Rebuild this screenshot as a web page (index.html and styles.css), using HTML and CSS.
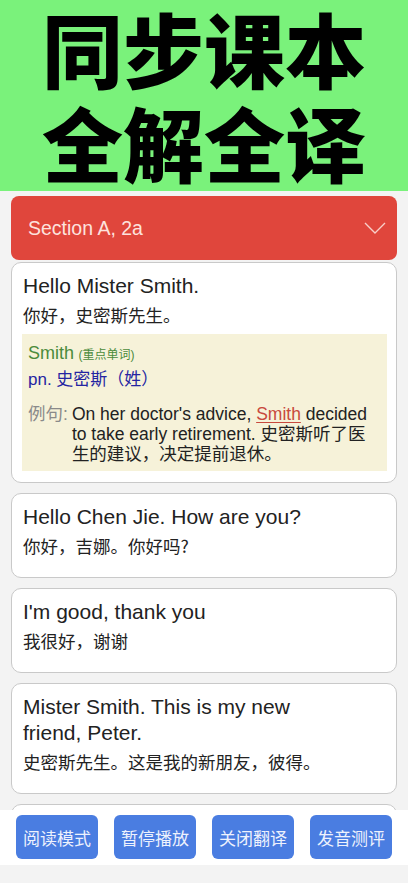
FILE: index.html
```html
<!DOCTYPE html>
<html lang="zh-CN">
<head>
<meta charset="utf-8">
<title>同步课本 全解全译</title>
<link rel="stylesheet" href="styles.css">
</head>
<body>
<div class="page">
  <header class="banner">
    <div class="banner-line">同步课本</div>
    <div class="banner-line">全解全译</div>
  </header>

  <main class="scroll">
    <div class="section-head">
      <span class="section-title">Section A, 2a</span>
      <svg class="chevron" width="22" height="12" viewBox="0 0 22 12" aria-hidden="true">
        <polyline points="1,1 11,11 21,1" fill="none" stroke="#f8cfc9" stroke-width="1.4"/>
      </svg>
    </div>

    <div class="card">
      <div class="en">Hello Mister Smith.</div>
      <div class="zh">你好，史密斯先生。</div>
      <div class="word-box">
        <div class="word-line"><span class="word">Smith</span> <span class="word-tag">(重点单词)</span></div>
        <div class="word-def">pn. 史密斯（姓）</div>
        <div class="example">
          <span class="example-label">例句:</span>
          <span class="example-text">On her doctor's advice, <span class="hl">Smith</span> decided to take early retirement. 史密斯听了医生的建议，决定提前退休。</span>
        </div>
      </div>
    </div>

    <div class="card">
      <div class="en">Hello Chen Jie. How are you?</div>
      <div class="zh">你好，吉娜。你好吗?</div>
    </div>

    <div class="card">
      <div class="en">I'm good, thank you</div>
      <div class="zh">我很好，谢谢</div>
    </div>

    <div class="card">
      <div class="en">Mister Smith. This is my new<br>friend, Peter.</div>
      <div class="zh">史密斯先生。这是我的新朋友，彼得。</div>
    </div>

    <div class="card">
      <div class="en">Nice to meet you, Peter.</div>
      <div class="zh">很高兴见到你，彼得。</div>
    </div>
  </main>

  <nav class="toolbar">
    <button class="tool-btn">阅读模式</button>
    <button class="tool-btn">暂停播放</button>
    <button class="tool-btn">关闭翻译</button>
    <button class="tool-btn">发音测评</button>
  </nav>
  <div class="bottom-gap"></div>
</div>
</body>
</html>
```

FILE: styles.css
```css
* { box-sizing: border-box; }

html, body {
  margin: 0;
  padding: 0;
  background: #f3f3f3;
}

body {
  font-family: "Liberation Sans", Arial, "Noto Sans CJK SC", sans-serif;
  color: #222;
}

.page {
  height: 883px;
  display: flex;
  flex-direction: column;
  overflow: hidden;
}

.banner {
  flex: 0 0 191px;
  background: #7af27b;
  display: flex;
  flex-direction: column;
  align-items: center;
  padding-top: 0;
}

.banner-line {
  font-family: "Noto Sans CJK SC", sans-serif;
  font-weight: 900;
  font-size: 81px;
  line-height: 94px;
  color: #000;
  letter-spacing: 0;
}

.scroll {
  flex: 1 1 auto;
  overflow: hidden;
  padding: 5px 11px 0;
}

.section-head {
  height: 64px;
  margin-bottom: 2px;
  background: #e0463c;
  border-radius: 8px;
  display: flex;
  align-items: center;
  justify-content: space-between;
  padding: 0 11px 0 17px;
}

.section-title {
  font-size: 19.5px;
  color: #fde2de;
}

.chevron { display: block; }

.card {
  background: #fff;
  border: 1px solid #c9c9c9;
  border-radius: 10px;
  padding: 10px 10px 19px 11px;
  margin-bottom: 10px;
}

.en {
  font-size: 21px;
  line-height: 26px;
  color: #222;
}

.zh {
  margin-top: 3px;
  font-family: "Noto Sans CJK SC", sans-serif;
  font-size: 17.5px;
  line-height: 25px;
  color: #222;
}

.word-box {
  margin: 7px -1px -8px -1px;
  background: #f6f2d9;
  padding: 6px 6px 7px 6px;
}

.word-line {
  line-height: 26px;
}

.word {
  font-size: 18px;
  color: #4b8b3b;
}

.word-tag {
  font-size: 12px;
  color: #4b8b3b;
  font-family: "Liberation Sans", "Noto Sans CJK SC", sans-serif;
}

.word-def {
  font-size: 17px;
  line-height: 24px;
  color: #2424a2;
}

.example {
  margin-top: 12px;
  display: flex;
  gap: 4px;
  font-size: 17.5px;
  line-height: 20px;
}

.example-label {
  flex: 0 0 auto;
  color: #8a8a8a;
}

.example-text {
  color: #222;
}

.hl {
  color: #c8493d;
  text-decoration: underline;
  text-underline-offset: 2px;
}

.toolbar {
  flex: 0 0 55px;
  background: #fff;
  display: flex;
  gap: 16px;
  padding: 5px 16px 6px;
}

.tool-btn {
  flex: 1 1 0;
  border: none;
  border-radius: 6px;
  background: #4a7de1;
  color: #eef2fd;
  font-family: "Noto Sans CJK SC", sans-serif;
  font-size: 17px;
  padding: 0;
}

.bottom-gap {
  flex: 0 0 18px;
  background: #f3f3f3;
}
```
